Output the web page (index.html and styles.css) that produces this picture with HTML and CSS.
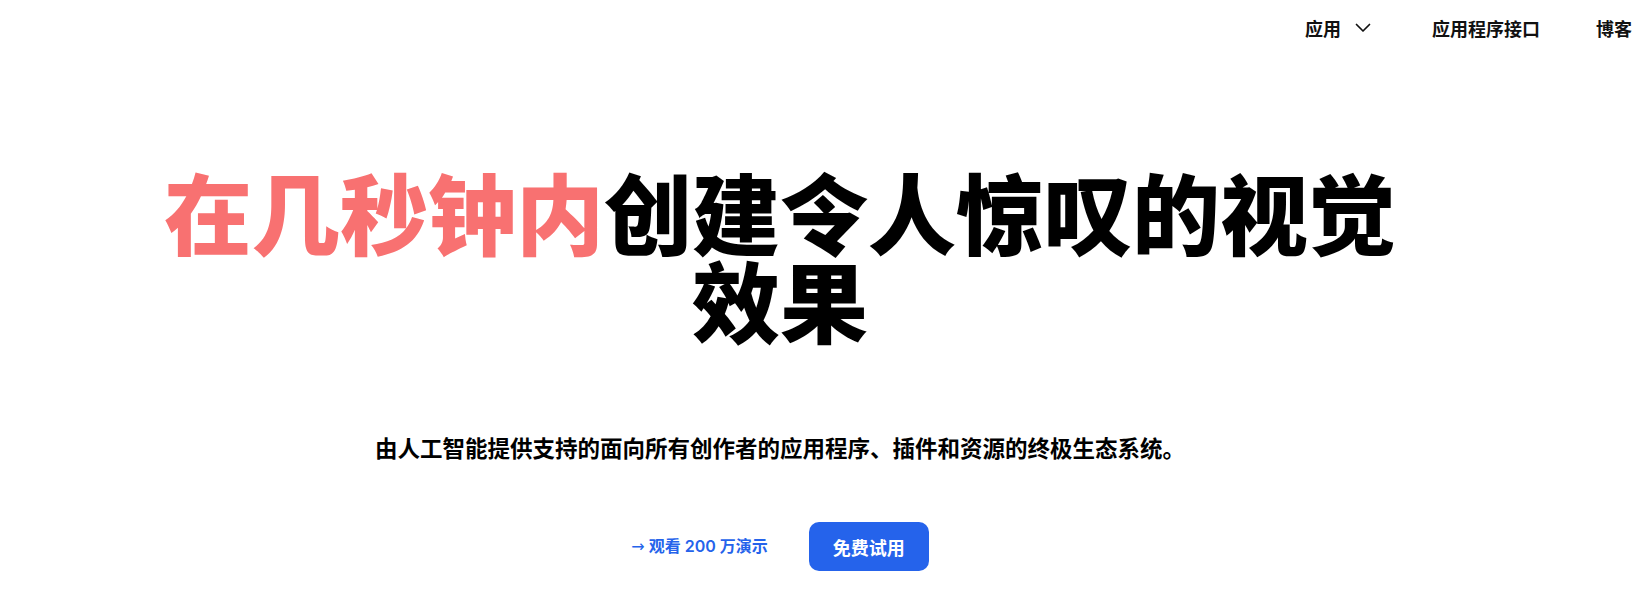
FILE: index.html
```html
<!DOCTYPE html>
<html lang="zh-CN">
<head>
<meta charset="utf-8">
<title>在几秒钟内创建令人惊叹的视觉效果</title>
<link rel="stylesheet" href="styles.css">
</head>
<body>
<header class="topbar">
  <nav class="nav">
    <a class="nav-item nav-drop" href="#">应用
      <svg class="chev" viewBox="0 0 16 10" width="16" height="10" aria-hidden="true"><path d="M1.5 1.5 L8 8 L14.5 1.5" fill="none" stroke="#111" stroke-width="1.7" stroke-linecap="round" stroke-linejoin="round"/></svg>
    </a>
    <a class="nav-item nav-api" href="#">应用程序接口</a>
    <a class="nav-item" href="#">博客</a>
  </nav>
</header>
<main class="hero">
  <h1 class="title"><span class="accent">在几秒钟内</span>创建令人惊叹的视觉效果</h1>
  <p class="subtitle">由人工智能提供支持的面向所有创作者的应用程序、插件和资源的终极生态系统。</p>
  <div class="actions">
    <a class="demo-link" href="#"><span class="arrow">→</span> 观看 200 万演示</a>
    <a class="cta" href="#">免费试用</a>
  </div>
</main>
</body>
</html>
```
FILE: styles.css
```css
html, body {
  margin: 0;
  padding: 0;
  background: #ffffff;
}
body {
  width: 1638px;
  height: 611px;
  overflow: hidden;
  font-family: "Noto Sans CJK SC", "Noto Sans", sans-serif;
  color: #000;
}
a { text-decoration: none; color: inherit; }

.topbar {
  height: 56px;
  display: flex;
  justify-content: flex-end;
  align-items: center;
}
.nav {
  display: flex;
  align-items: center;
  gap: 56px;
  padding-right: 6px;
}
.nav-item {
  font-size: 18px;
  font-weight: 700;
  line-height: 26px;
  color: #111;
  display: flex;
  align-items: center;
}
.nav-drop {
  margin-right: 2px;
}
.nav-drop .chev {
  margin-left: 14px;
  margin-right: 3px;
}

.hero {
  width: 1560px;
  display: flex;
  flex-direction: column;
  align-items: center;
  text-align: center;
}
.title {
  max-width: 1260px;
  margin: 110px 0 0;
  font-size: 88px;
  line-height: 88px;
  font-weight: 900;
  letter-spacing: 0;
}
.accent { color: #f87171; }

.subtitle {
  margin: 89px 0 0;
  font-size: 22.5px;
  line-height: 32px;
  font-weight: 700;
  color: #000;
}

.actions {
  margin-top: 59px;
  display: flex;
  align-items: center;
  gap: 41px;
}
.demo-link {
  font-family: "Inter", "Noto Sans CJK SC", sans-serif;
  font-size: 16px;
  font-weight: 600;
  color: #2563eb;
  line-height: 24px;
}
.demo-link .arrow {
  font-family: "DejaVu Sans", sans-serif;
  font-weight: 400;
}
.cta {
  display: flex;
  align-items: center;
  justify-content: center;
  height: 49px;
  padding: 0 24px;
  border-radius: 10px;
  background: #2563eb;
  color: #fff;
  font-size: 18px;
  font-weight: 700;
  box-sizing: border-box;
}
```
